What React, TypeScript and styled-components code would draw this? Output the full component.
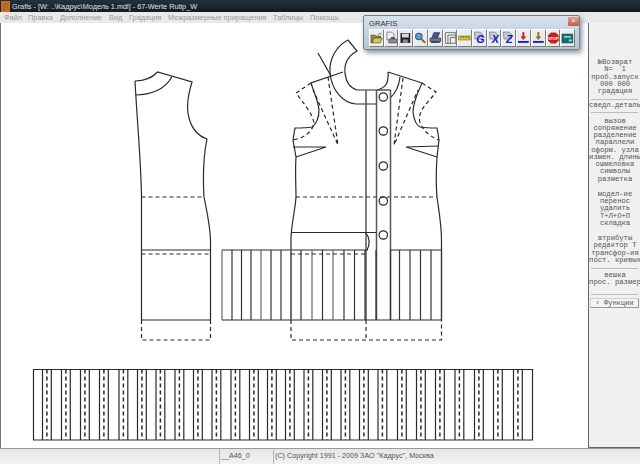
import React from "react";
import styled, { createGlobalStyle } from "styled-components";

const GlobalStyle = createGlobalStyle`
  html, body { margin: 0; padding: 0; background: #fff; }
  body { width: 640px; height: 464px; overflow: hidden; font-family: "Liberation Sans", Arial, sans-serif; }
`;

const Screen = styled.div`
  position: relative;
  display: flex;
  flex-direction: column;
  width: 640px;
  height: 464px;
  overflow: hidden;
`;

const TitleBar = styled.div`
  display: flex;
  align-items: center;
  gap: 2px;
  height: 12px;
  padding-left: 1px;
  background: linear-gradient(#24313d, #121c25);
  color: #dfe3e6;
  font-size: 7.3px;
  white-space: nowrap;
`;

const MenuBar = styled.div`
  display: flex;
  align-items: center;
  height: 11px;
  background: #e9e9e9;
  color: #9a9a9a;
  font-size: 7.4px;
  white-space: nowrap;
`;

const MenuItem = styled.span<{ $w: number }>`
  width: ${(p) => p.$w}px;
`;

const Middle = styled.div`
  flex: 1;
  display: flex;
  min-height: 0;
`;

const Canvas = styled.div`
  flex: 1;
  background: #fff;
  border-left: 1px solid #777;
  min-width: 0;
`;

const SidePanel = styled.div`
  display: flex;
  flex-direction: column;
  box-sizing: border-box;
  width: 52px;
  padding-top: 36px;
  background: #f0f0f0;
  border-left: 1px solid #666;
  border-bottom: 1px solid #666;
  color: #555;
  font-family: "Liberation Mono", monospace;
  font-size: 7.2px;
  line-height: 7.25px;
  text-align: center;
  overflow: hidden;
`;

const PanelLine = styled.div`
  white-space: pre;
  height: 7.25px;
  width: 60px;
  margin-left: -4px;
`;

const PanelGroup = styled.div<{ $gap?: number }>`
  margin-top: ${(p) => p.$gap ?? 0}px;
`;

const PanelRule = styled.div<{ $gap: number; $after: number }>`
  height: 1px;
  margin: ${(p) => p.$gap}px 2px ${(p) => p.$after}px 2px;
  background: #bcbcbc;
`;

const FuncButton = styled.div`
  box-sizing: border-box;
  height: 10px;
  margin: 1px 1px 0 1px;
  background: #f4f4f4;
  border: 1px solid #d0d0d0;
  border-right-color: #999;
  border-bottom-color: #999;
  font-size: 7px;
  line-height: 8px;
`;

const StatusBar = styled.div`
  display: flex;
  height: 15px;
  background: linear-gradient(#e6e6e6, #f3f3f3);
  border-top: 1px solid #999;
  color: #555;
  font-size: 7.2px;
  line-height: 13px;
  white-space: nowrap;
`;

const StatusCell = styled.div<{ $w?: number }>`
  box-sizing: border-box;
  width: ${(p) => (p.$w ? `${p.$w}px` : "auto")};
  padding-left: 1px;
  border-left: 1px solid #b5b5b5;
  &:first-child { border-left: 0; }
`;

const ToolWindow = styled.div`
  position: absolute;
  left: 363px;
  top: 15px;
  box-sizing: border-box;
  width: 217px;
  height: 35px;
  padding: 3px 5px;
  background: linear-gradient(#d8e3ee, #bfd0de 60%, #b4c6d4);
  border: 1px solid #6f7f8c;
  border-radius: 2px;
  box-shadow: 2px 3px 5px rgba(40, 70, 90, 0.55);
`;

const ToolTitle = styled.div`
  color: #333;
  font-size: 7.6px;
  line-height: 9px;
  height: 10px;
`;

const CloseButton = styled.div`
  position: absolute;
  right: 0;
  top: 1px;
  width: 11px;
  height: 9px;
  border-radius: 1px;
  background: linear-gradient(#e0a096, #c8584c);
  color: #fff;
  font-size: 7px;
  line-height: 8px;
  text-align: center;
`;

const ToolRow = styled.div`
  display: flex;
  gap: 1px;
`;

const ToolButton = styled.div`
  display: flex;
  align-items: center;
  justify-content: center;
  width: 14px;
  height: 16px;
  background: #ececec;
  border: 0 solid #fff;
  border-width: 1px 0 0 1px;
  box-shadow: 1px 1px 0 #7d7d7d;
  overflow: hidden;
`;

const ToolGlyph = styled.svg`
  display: block;
  width: 13px;
  height: 14px;
`;

const LetterIcon = ({ ch }: { ch: string }) => (
  <ToolGlyph viewBox="0 0 13 14">
    <path d="M1.5 1h6l2 2v5h-7.5z" fill="#c4ccd6" stroke="#555f6c" strokeWidth="0.6" />
    <text x="7.5" y="12.5" fontFamily="Liberation Sans" fontWeight="700" fontStyle="italic" fontSize="11" fill="#1420c0" textAnchor="middle">{ch}</text>
  </ToolGlyph>
);

const ArrowIcon = ({ color }: { color: string }) => (
  <ToolGlyph viewBox="0 0 13 14">
    <path d="M6.5 1v6" stroke={color} strokeWidth="2" />
    <path d="M3.5 5.5h6l-3 3.5z" fill={color} />
    <path d="M1 11h11" stroke="#1a2ab0" strokeWidth="2" />
  </ToolGlyph>
);

const toolIcons: React.ReactNode[] = [
  <ToolGlyph viewBox="0 0 13 14" key="open">
    <path d="M1 4h4l1 1h5v2H4l-2 5H1z" fill="#a88a2c" stroke="#4b4420" strokeWidth="0.6" />
    <path d="M4 7h8.5l-2 5H2z" fill="#d8c460" stroke="#4b4420" strokeWidth="0.6" />
    <path d="M8 4c1-2 2.5-2 4-1" fill="none" stroke="#2c6a4a" strokeWidth="0.8" />
  </ToolGlyph>,
  <ToolGlyph viewBox="0 0 13 14" key="props">
    <path d="M2 1h5l2 2v6H2z" fill="#eef2f8" stroke="#4a6a92" strokeWidth="0.7" />
    <path d="M4 8h8v4H4z" fill="#8d8d8d" stroke="#333" strokeWidth="0.6" />
    <path d="M6 6h4v2H6z" fill="#555" />
  </ToolGlyph>,
  <ToolGlyph viewBox="0 0 13 14" key="save">
    <path d="M1.5 2h10v10h-10z" fill="#222" />
    <path d="M3 2.5h7v4H3z" fill="#d8d8d8" />
    <path d="M4 8.5h5v3.5H4z" fill="#8a8a8a" />
  </ToolGlyph>,
  <ToolGlyph viewBox="0 0 13 14" key="zoom">
    <circle cx="5" cy="5.5" r="3.3" fill="#5a9bd8" stroke="#2a5a96" strokeWidth="1.1" />
    <path d="M7.5 8l4 4" stroke="#8a6a28" strokeWidth="2" />
  </ToolGlyph>,
  <ToolGlyph viewBox="0 0 13 14" key="print">
    <path d="M5 1.5h6l-2 5H3z" fill="#3a55a8" stroke="#1b2a66" strokeWidth="0.6" />
    <path d="M1 7h11v3.5H1z" fill="#6d7788" stroke="#222" strokeWidth="0.6" />
    <path d="M2 10.5h9v1.5H2z" fill="#2a3560" />
  </ToolGlyph>,
  <ToolGlyph viewBox="0 0 13 14" key="sheets">
    <path d="M1.5 1.5h10.5v11H1.5z" fill="#eee" stroke="#444" strokeWidth="0.7" />
    <path d="M4 12.5V4h8M6.5 12.5V6.5H12" fill="none" stroke="#444" strokeWidth="0.7" />
  </ToolGlyph>,
  <ToolGlyph viewBox="0 0 13 14" key="ruler">
    <path d="M0.5 5h12v4H0.5z" fill="#d8c92e" stroke="#5b5416" strokeWidth="0.5" />
    <path d="M3 5v2M5.5 5v2M8 5v2M10.5 5v2" stroke="#333" strokeWidth="0.6" />
  </ToolGlyph>,
  <LetterIcon ch="G" key="g" />,
  <LetterIcon ch="X" key="x" />,
  <LetterIcon ch="Z" key="z" />,
  <ArrowIcon color="#c8201c" key="down1" />,
  <ArrowIcon color="#a06a18" key="down2" />,
  <ToolGlyph viewBox="0 0 13 14" key="stop">
    <path d="M4 1.5h5l3 3v5l-3 3H4l-3-3v-5z" fill="#cf1d1d" />
    <text x="6.5" y="8.7" fontFamily="Liberation Sans" fontWeight="700" fontSize="3.8" fill="#fff" textAnchor="middle">STOP</text>
  </ToolGlyph>,
  <ToolGlyph viewBox="0 0 13 14" key="box">
    <path d="M1 3h11v9H1z" fill="#0f6f6f" stroke="#0a3a3a" strokeWidth="0.6" />
    <path d="M3 5h7v1.6H3z" fill="#9fd8d0" />
    <path d="M8 8.5h3v2H8z" fill="#9dd" />
  </ToolGlyph>,
];

const panelTop = ["№Возврат", "N=  1", "проб.запуск", "000 000", "градация"];
const panelTools = ["вызов", "сопряжение", "разделение", "параллели", "оформ. узла", "измен. длины", "ошмеловка", "символы", "разметка"];
const panelModel = ["модел-ие", "перенос", "удалить", "Т+Л+О+П", "складка"];
const panelAttr = ["атрибуты", "редактор Т", "трансфор-ия", "пост. кривых"];
const panelExtra = ["вешка", "прос. размер"];

const menuItems: [string, number][] = [
  ["Файл", 24], ["Правка", 32], ["Дополнение", 49], ["Вид", 20], ["Градация", 39],
  ["Межразмерные приращения", 105], ["Таблицы", 37], ["Помощь", 40],
];

// pleat lines of the skirt, x in page px
const pleats = [222, 232, 241.5, 251, 261, 271, 281, 291, 301, 312, 322.5, 333, 344, 354.5, 365, 376, 390.5, 399.5, 410, 420.5, 431, 441.5];
const buttons = [97, 131, 166, 201, 235];
// pairs of the long pleated strip
const stripStarts = [42.5, 61.5, 80.5, 99.5, 119, 137.5, 156, 175, 193.5, 212, 231, 249.5, 267.5, 285.5, 304, 322.5, 341, 359.5, 378, 397.5, 416.5, 435.5, 455, 474.5, 493.5, 513.5];

const Drawing = styled.svg`
  display: block;
  width: 587px;
  height: 426px;
  fill: none;
  stroke: #2a2a2a;
  stroke-width: 1.2;
`;

const Dash = styled.path`
  stroke-dasharray: 4 3;
`;

const Heavy = styled.path`
  stroke: #555;
  stroke-width: 1.5;
`;

const PatternDrawing = () => (
  // viewBox keeps page coordinates, easier to compare with the reference
  <Drawing viewBox="1 23 587 426">
    {/* back */}
    <path d="M135 81C146 81 152 78 157.5 72L192 82C188 95 186 108 189 118C192 129 198 136 207 139C203 158 203 180 204 197C207 212 210 225 210.5 240V320" />
    <path d="M135 81C137 120 141 160 141.5 197V320" />
    <path d="M135.5 95C150 95 165 90 172 76.5" />
    <path d="M141.5 250H210.5M141.5 320H210.5" />
    <Dash d="M141.5 197H204M141.5 254H210.5M141.5 320V340H210.5V320" />

    {/* front, left half */}
    <path d="M348 40L357 51C348 56 344 64 345 73C346 82 350 88 357 90H377" />
    <path d="M348 40C336 46 329 60 330 72C331 90 343 103 356 104H376" />
    <path d="M318 53L331 76M343 72L311 83C313 90 318 100 319 110C319 118 316 124 312 127C306 128 300 128 295 128L293 140L296 157C295 172 296 185 296 197C295 212 291 225 291 240V320" />
    <path d="M293 147H326L296 157" />
    <Dash d="M311 83L296 93C303 103 312 112 314 123C312 133 303 138 293 140" />
    <Dash d="M328 77L338 145L313 90" />

    {/* front, right half */}
    <path d="M388 72C389 84 385 88 377 90" />
    <path d="M388 72L422 83C418 92 413 102 413 112C414 120 416 125 420 127C426 128 431 128 437 128L439 140L437 157C436 172 436 185 437 197C439 212 441.5 225 441.5 240V320" />
    <path d="M406 147L439 146M406 147L437 157" />
    <path d="M400 77C399 86 396 93 390 98" />
    <Dash d="M422 83L436 92C428 103 417 110 420 123C424 132 431 137 439 140" />
    <Dash d="M403 78L394 145L418 90" />
    <Dash d="M296 197H437" />

    {/* placket */}
    <Heavy d="M366 90V320M376.5 90V320M390.5 90V320M377 90H390.5" />
    {buttons.map((y) => (
      <circle key={y} cx={383.3} cy={y} r={4.2} />
    ))}

    {/* pocket and pleated skirt */}
    <path d="M291 232.5H376M366 233C370 238 370 245 367 250" />
    <path d="M222 250H368M390.5 250H441.5M222 320H441.5" />
    {pleats.map((x) => (
      <path key={x} d={`M${x} 250V320`} stroke={Math.round(x) % 3 === 0 ? "#666" : "#333"} />
    ))}
    <Dash d="M291 254H366M291 320V340H441.5V320M366 320V340" />

    {/* long strip */}
    <path d="M33.5 369.5H532.5V440H33.5Z" />
    {stripStarts.map((x) => (
      <g key={x}>
        <path d={`M${x} 369.5V440M${x + 8.8} 369.5V440`} />
        <Dash d={`M${x + 4.4} 369.5V440`} strokeWidth="1.5" strokeDasharray="4 2" />
      </g>
    ))}
  </Drawing>
);

export default function App() {
  return (
    <Screen>
      <GlobalStyle />
      <TitleBar>
        <svg width="9" height="11" viewBox="0 0 9 11">
          <path d="M0 0h9v11H0z" fill="#d66a1c" />
          <path d="M2 3h5M2 6h5M2 8.5h3" stroke="#3a8a3a" strokeWidth="1.2" />
        </svg>
        Grafis - [W: ..\Кадрус\Модель 1.mdl] - 67-Werte Rutip_W
      </TitleBar>
      <MenuBar>
        <MenuItem $w={4} />
        {menuItems.map(([name, w]) => (
          <MenuItem key={name} $w={w}>{name}</MenuItem>
        ))}
      </MenuBar>
      <Middle>
        <Canvas>
          <PatternDrawing />
        </Canvas>
        <SidePanel>
          <PanelGroup>
            {panelTop.map((t) => <PanelLine key={t}>{t}</PanelLine>)}
          </PanelGroup>
          <PanelRule $gap={4} $after={2} />
          <PanelLine>сведл.деталь</PanelLine>
          <PanelRule $gap={2} $after={5} />
          <PanelGroup>
            {panelTools.map((t) => <PanelLine key={t}>{t}</PanelLine>)}
          </PanelGroup>
          <PanelGroup $gap={8}>
            {panelModel.map((t) => <PanelLine key={t}>{t}</PanelLine>)}
          </PanelGroup>
          <PanelGroup $gap={8}>
            {panelAttr.map((t) => <PanelLine key={t}>{t}</PanelLine>)}
          </PanelGroup>
          <PanelRule $gap={4} $after={3} />
          <PanelGroup>
            {panelExtra.map((t) => <PanelLine key={t}>{t}</PanelLine>)}
          </PanelGroup>
          <PanelRule $gap={7} $after={2} />
          <FuncButton>‹ Функции</FuncButton>
        </SidePanel>
      </Middle>
      <StatusBar>
        <StatusCell $w={219} />
        <StatusCell $w={54}>__A46_0</StatusCell>
        <StatusCell>(C) Copyright 1991 - 2009 ЗАО "Кадрус", Москва</StatusCell>
      </StatusBar>
      <ToolWindow>
        <ToolTitle>GRAFIS</ToolTitle>
        <CloseButton>×</CloseButton>
        <ToolRow>
          {toolIcons.map((icon, i) => (
            <ToolButton key={i}>{icon}</ToolButton>
          ))}
        </ToolRow>
      </ToolWindow>
    </Screen>
  );
}
